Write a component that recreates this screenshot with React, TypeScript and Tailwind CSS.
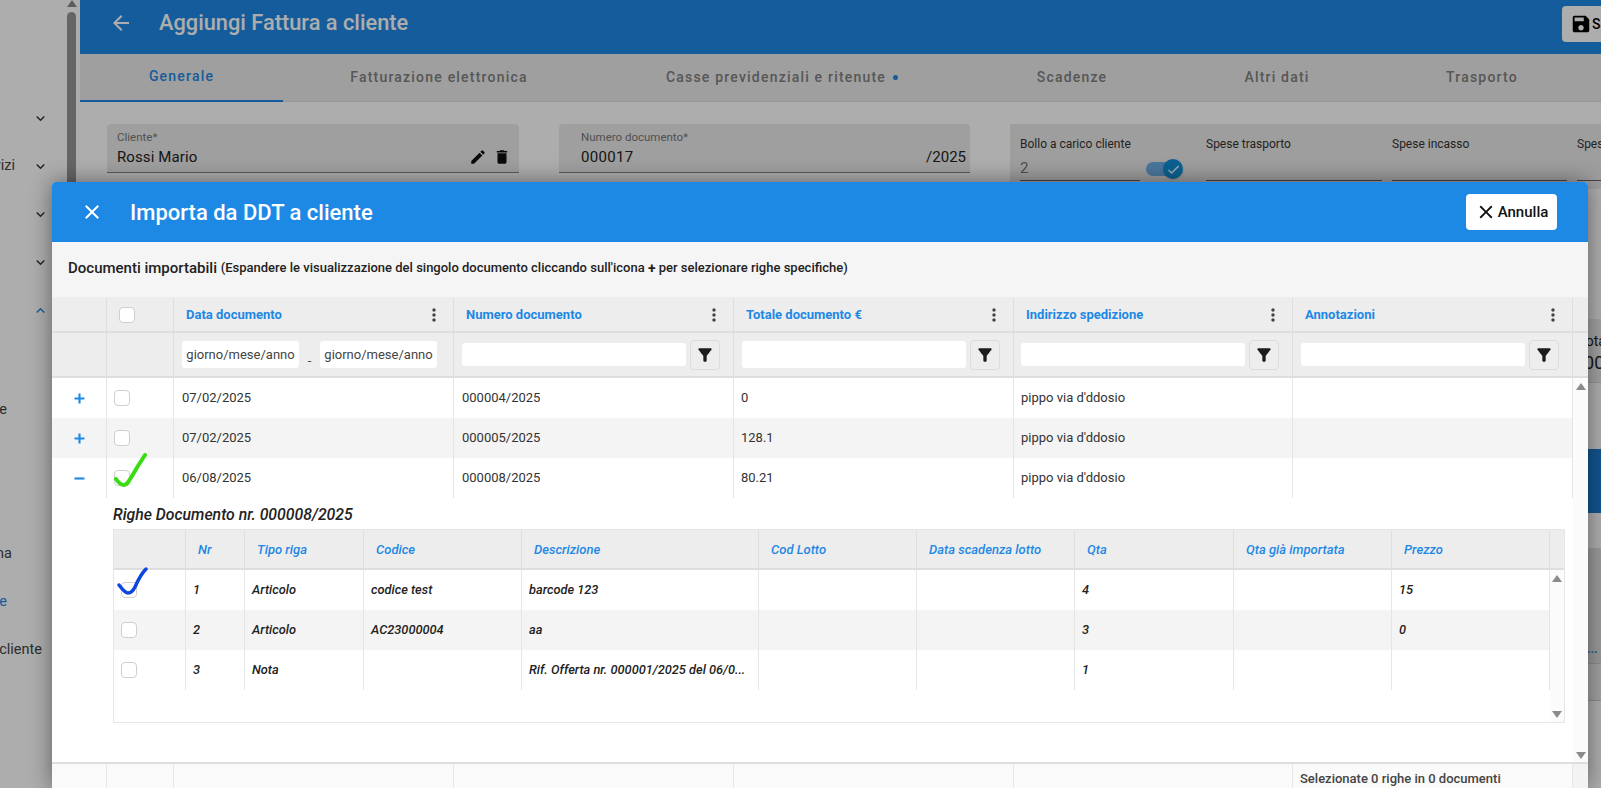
import React from 'react';

// Material icon paths used around the page
const P = {
  back: 'M20 11H7.83l5.59-5.59L12 4l-8 8 8 8 1.41-1.41L7.83 13H20v-2z',
  close: 'M19 6.41 17.59 5 12 10.59 6.41 5 5 6.41 10.59 12 5 17.59 6.41 19 12 13.41 17.59 19 19 17.59 13.41 12z',
  edit: 'M3 17.25V21h3.75L17.81 9.94l-3.75-3.75L3 17.25zM20.71 7.04c.39-.39.39-1.02 0-1.41l-2.34-2.34a.9959.9959 0 0 0-1.41 0l-1.83 1.83 3.75 3.75 1.83-1.83z',
  del: 'M6 19c0 1.1.9 2 2 2h8c1.1 0 2-.9 2-2V7H6v12zM19 4h-3.5l-1-1h-5l-1 1H5v2h14V4z',
  save: 'M17 3H5c-1.11 0-2 .9-2 2v14c0 1.1.89 2 2 2h14c1.1 0 2-.9 2-2V7l-4-4zm-5 16c-1.66 0-3-1.34-3-3s1.34-3 3-3 3 1.34 3 3-1.34 3-3 3zm3-10H5V5h10v4z',
  filter: 'M4.25 5.61C6.27 8.2 10 13 10 13v6c0 .55.45 1 1 1h2c.55 0 1-.45 1-1v-6s3.72-4.8 5.74-7.39c.51-.66.04-1.61-.79-1.61H5.04c-.83 0-1.3.95-.79 1.61z',
  more: 'M12 8c1.1 0 2-.9 2-2s-.9-2-2-2-2 .9-2 2 .9 2 2 2zm0 2c-1.1 0-2 .9-2 2s.9 2 2 2 2-.9 2-2-.9-2-2-2zm0 6c-1.1 0-2 .9-2 2s.9 2 2 2 2-.9 2-2-.9-2-2-2z',
  check: 'M9 16.17 4.83 12l-1.42 1.41L9 19 21 7l-1.41-1.41z',
  down: 'M16.59 8.59 12 13.17 7.41 8.59 6 10l6 6 6-6z',
  up: 'M12 8l-6 6 1.41 1.41L12 10.83l4.59 4.58L18 14z',
  plus: 'M10.5 5h3v5.5H19v3h-5.5V19h-3v-5.5H5v-3h5.5z',
  minus: 'M5 10.5h14v3H5z',
};

const Icon = ({ d, className }: { d: string; className: string }) => (
  <svg viewBox="0 0 24 24" fill="currentColor" className={className}><path d={d} /></svg>
);

const Box = () => <div className="w-4 h-4 rounded-[4px] border border-[#cfcfcf] bg-white" />;

const ArrowUp = () => <div className="w-0 h-0 border-x-[5px] border-x-transparent border-b-[7px] border-b-[#8a8a8a]" />;
const ArrowDown = () => <div className="w-0 h-0 border-x-[5px] border-x-transparent border-t-[7px] border-t-[#8a8a8a]" />;

const sideRows = [
  { label: '', open: false },
  { label: 'Listini servizi', open: false },
  { label: '', open: false },
  { label: '', open: false },
  { label: '', open: true },
];
const sideSub = [
  { label: '', mr: 'mr-[60px]' },
  { label: 'Fattura a cliente', mr: 'mr-[60px]' },
  { label: '', mr: 'mr-[60px]' },
  { label: '', mr: 'mr-[60px]' },
  { label: 'Nota di credito interna', mr: 'mr-[55px]' },
  { label: 'Fattura a cliente', mr: 'mr-[60px]', active: true },
  { label: 'Acquisti da cliente', mr: 'mr-[25px]' },
];

const Sidebar = () => (
  <div className="w-20 shrink-0 flex bg-white">
    <div className="w-[67px] shrink-0 pt-[94px] overflow-hidden text-[14.5px] text-[#444]">
      {sideRows.map((r, i) => (
        <div key={i} className="h-12 flex items-center">
          <div className="w-[15px] shrink-0 flex justify-end whitespace-nowrap">{r.label}</div>
          <Icon d={r.open ? P.up : P.down} className={`w-[17px] h-[17px] ml-[17px] ${r.open ? 'text-[#1e88e5]' : 'text-[#333]'}`} />
        </div>
      ))}
      <div className="mt-[4px]">
        {sideSub.map((r, i) => (
          <div key={i} className={`h-12 flex items-center justify-end whitespace-nowrap ${r.active ? 'text-[#1e88e5]' : ''}`}>
            <span className={r.mr}>{r.label}</span>
          </div>
        ))}
      </div>
    </div>
    <div className="w-[9px] shrink-0 flex flex-col items-center">
      <ArrowUp />
      <div className="w-[9px] mt-[5px] h-[500px] rounded-full bg-[#969696]" />
    </div>
  </div>
);

const tabs = [
  { t: 'Generale', w: 'w-[203px]', on: true },
  { t: 'Fatturazione elettronica', w: 'w-[312px]' },
  { t: 'Casse previdenziali e ritenute', w: 'w-[374px]', dot: true },
  { t: 'Scadenze', w: 'w-[206px]' },
  { t: 'Altri dati', w: 'w-[204px]' },
  { t: 'Trasporto', w: 'w-[206px]' },
];

const Page = () => (
  <div className="flex-1 min-w-0 flex flex-col">
    <div className="h-[54px] shrink-0 pb-[8px] bg-[#1e88e5] flex items-center text-white">
      <Icon d={P.back} className="w-6 h-6 ml-[29px]" />
      <span className="ml-[26px] text-[21.8px] font-medium">Aggiungi Fattura a cliente</span>
      <div className="ml-auto mt-[2px] w-[39px] h-9 rounded-l bg-white text-black flex items-center pl-[8px] text-[14px] font-medium overflow-hidden whitespace-nowrap">
        <Icon d={P.save} className="w-[22px] h-[22px] shrink-0" />
        <span>Salva</span>
      </div>
    </div>
    <div className="h-12 shrink-0 bg-[#ebebeb] border-b border-[#dcdcdc] flex">
      {tabs.map(t => (
        <div key={t.t} className={`${t.w} shrink-0 h-12 pb-[2px] flex items-center justify-center gap-[7px] text-[14px] font-medium tracking-[1.2px] ${t.on ? 'text-[#1e88e5] border-b-2 border-[#1e88e5]' : 'text-[#808080]'}`}>
          {t.t}
          {t.dot && <span className="w-[5px] h-[5px] rounded-full bg-[#1e88e5]" />}
        </div>
      ))}
    </div>
    <div className="pl-[27px] pt-[22px] flex flex-col">
      <div className="flex h-[65px]">
        <div className="w-[412px] h-[49px] rounded-t bg-[#ebebeb] border-b border-[#888] pl-[10px] pt-[6px]">
          <div className="text-[11.5px] leading-[15px] text-[#777]">Cliente*</div>
          <div className="flex items-center pr-2 text-[15px] leading-5 mt-[2px] text-[#222] tracking-[.1px]">
            Rossi Mario
            <Icon d={P.edit} className="w-[18px] h-[18px] ml-auto text-[#111]" />
            <Icon d={P.del} className="w-[18px] h-[18px] ml-[6px] text-[#111]" />
          </div>
        </div>
        <div className="w-[411px] h-[49px] ml-10 rounded-t bg-[#ebebeb] border-b border-[#888] pl-[22px] pt-[6px]">
          <div className="text-[11.5px] leading-[15px] text-[#777]">Numero documento*</div>
          <div className="flex items-center pr-1 text-[15px] leading-5 mt-[2px] text-[#222] tracking-[.3px]">
            000017
            <span className="ml-auto tracking-normal">/2025</span>
          </div>
        </div>
        <div className="ml-10 flex-1 min-w-0 h-[65px] bg-[#e9e9e9] pl-[10px] pt-[12px] flex text-[12px] text-[#333] overflow-hidden">
          <div className="w-[120px] shrink-0 h-[45px] border-b border-[#666]">
            <div className="leading-[16px] whitespace-nowrap">Bollo a carico cliente</div>
            <div className="text-[15px] mt-[6px] leading-5 text-[#777]">2</div>
          </div>
          <div className="w-[38px] shrink-0 ml-[4px] relative">
            <div className="absolute left-[2px] top-[26px] w-[28px] h-[14px] rounded-full bg-[#6eafe6]" />
            <div className="absolute left-[19px] top-[23px] w-5 h-5 rounded-full bg-[#1090d8] shadow flex items-center justify-center text-white">
              <Icon d={P.check} className="w-[15px] h-[15px]" />
            </div>
          </div>
          <div className="w-[176px] shrink-0 ml-[24px] h-[45px] border-b border-[#666] leading-[16px]">Spese trasporto</div>
          <div className="w-[175px] shrink-0 ml-[10px] h-[45px] border-b border-[#666] leading-[16px]">Spese incasso</div>
          <div className="w-[100px] shrink-0 ml-[10px] h-[45px] border-b border-[#666] leading-[16px]">Spese bancarie</div>
        </div>
      </div>
      <div className="ml-[1393px] w-[200px] h-16 mt-[130px] bg-[#ececec] border-b border-[#dcdcdc] pl-[78px] text-[14px] text-[#222] whitespace-nowrap pt-3">
        <div className="leading-5">Totale</div>
        <div className="leading-5 text-[18px] mt-[2px] -ml-[4px]">1000</div>
      </div>
      <div className="ml-[1393px] w-[200px] h-16 mt-[66px] bg-[#1a7dd2]" />
      <div className="ml-[1393px] w-[200px] h-[116px] mt-[35px] bg-[#e2e2e2] border-b border-[#cfcfcf] pt-[95px] pl-[87px] text-[#1e88e5] font-bold text-[12px] leading-none">...</div>
      <div className="ml-[1393px] w-[200px] h-[37px] bg-[#ececec] border-b border-[#cfcfcf]" />
    </div>
  </div>
);

const Cols = ['w-[55px]', 'w-[67px]', 'w-[280px]', 'w-[280px]', 'w-[280px]', 'w-[279px]', 'w-[280px]'];
const headers = ['Data documento', 'Numero documento', 'Totale documento €', 'Indirizzo spedizione', 'Annotazioni'];

const docs = [
  { s: '+', d: '07/02/2025', n: '000004/2025', t: '0' },
  { s: '+', d: '07/02/2025', n: '000005/2025', t: '128.1' },
  { s: '-', d: '06/08/2025', n: '000008/2025', t: '80.21' },
];

const FilterCell = ({ col, pl, tall }: { col: string; pl: string; tall?: boolean }) => (
  <div className={`${col} shrink-0 h-full border-r border-[#dedede] ${pl} flex items-center`}>
    <div className={`w-[224px] ${tall ? 'h-[27px]' : 'h-[23px]'} rounded-[3px] bg-white`} />
    <div className="ml-[4px] w-[30px] h-[30px] rounded-[4px] border border-[#dcdcdc] flex items-center justify-center text-[#1c1c1c]">
      <Icon d={P.filter} className="w-5 h-5" />
    </div>
  </div>
);

const DateInput = () => (
  <div className="w-[117px] h-[27px] rounded-[3px] bg-white flex items-center justify-center text-[13px] text-[#444]">giorno/mese/anno</div>
);

const innerCols = ['w-[72px]', 'w-[59px]', 'w-[119px]', 'w-[158px]', 'w-[237px]', 'w-[158px]', 'w-[158px]', 'w-[159px]', 'w-[158px]', 'w-[158px]'];
const innerHead = ['', 'Nr', 'Tipo riga', 'Codice', 'Descrizione', 'Cod Lotto', 'Data scadenza lotto', 'Qta', 'Qta già importata', 'Prezzo'];
const innerRows = [
  ['', '1', 'Articolo', 'codice test', 'barcode 123', '', '', '4', '', '15'],
  ['', '2', 'Articolo', 'AC23000004', 'aa', '', '', '3', '', '0'],
  ['', '3', 'Nota', '', 'Rif. Offerta nr. 000001/2025 del 06/0...', '', '', '1', '', ''],
];

const InnerTable = () => (
  <div className="w-[1452px] h-[194px] border border-[#e6e6e6] italic flex flex-col">
    <div className="h-[40px] shrink-0 pt-[1px] bg-[#ededed] border-b-2 border-[#dedede] flex">
      {innerHead.map((h, i) => (
        <div key={i} className={`${innerCols[i]} shrink-0 border-r border-[#dedede] pl-3 flex items-center text-[13px] font-medium text-[#1e88e5] whitespace-nowrap`}>{h}</div>
      ))}
      <div className="flex-1" />
    </div>
    <div className="flex flex-1 min-h-0">
      <div className="w-[1436px] shrink-0">
        {innerRows.map((r, ri) => (
          <div key={ri} className={`h-10 flex ${ri === 1 ? 'bg-[#f4f4f4]' : ''}`}>
            {r.map((c, i) => (
              <div key={i} className={`${innerCols[i]} shrink-0 border-r border-[#e6e6e6] pl-[7px] flex items-center text-[12.8px] font-medium text-[#222] whitespace-nowrap relative`}>
                {i === 0 ? <Box /> : c}
                {i === 0 && ri === 0 && (
                  <svg viewBox="0 0 40 40" className="absolute left-[1px] top-[-4px] w-10 h-10" fill="none" stroke="#0b46e0" strokeWidth="3.5" strokeLinecap="round" strokeLinejoin="round">
                    <path d="M4 19C7 23 10 27 13 27C16 27 18 25 20 21C23 14 27 7 31 3" />
                  </svg>
                )}
              </div>
            ))}
          </div>
        ))}
      </div>
      <div className="flex-1 bg-[#fbfbfb] flex flex-col items-center justify-between pt-[5px] pb-[4px]">
        <ArrowUp />
        <ArrowDown />
      </div>
    </div>
  </div>
);

const Dialog = () => (
  <div className="absolute left-[52px] top-[182px] w-[1536px] h-[606px] bg-white rounded-t overflow-hidden shadow-[0_0_22px_rgba(0,0,0,0.45)] flex flex-col">
    <div className="h-[60px] shrink-0 bg-[#1e88e5] flex items-center text-white">
      <Icon d={P.close} className="w-6 h-6 ml-[28px]" />
      <span className="ml-[26px] text-[22px] font-medium">Importa da DDT a cliente</span>
      <div className="ml-auto mr-[31px] w-[91px] h-9 rounded bg-white text-[#111] flex items-center justify-center gap-[1px] text-[15px] font-medium">
        <Icon d={P.close} className="w-[22px] h-[22px]" />
        Annulla
      </div>
    </div>
    <div className="h-[55px] shrink-0 pb-[3px] bg-[#f5f5f5] pl-4 flex items-center text-[#222] font-medium text-[13px] whitespace-pre">
      <span className="text-[15px]">Documenti importabili </span>
      (Espandere le visualizzazione del singolo documento cliccando sull'icona <b className="font-bold text-[14px]">+</b> per selezionare righe specifiche)
    </div>

    <div className="h-[36px] shrink-0 pt-[1px] bg-[#ededed] border-b-2 border-[#dedede] flex">
      <div className={`${Cols[0]} shrink-0 border-r border-[#dedede]`} />
      <div className={`${Cols[1]} shrink-0 border-r border-[#dedede] pl-[12px] flex items-center`}><Box /></div>
      {headers.map((h, i) => (
        <div key={h} className={`${Cols[i + 2]} shrink-0 border-r border-[#dedede] pl-[12px] pr-[9px] flex items-center justify-between text-[13px] font-bold text-[#1e88e5]`}>
          {h}
          <Icon d={P.more} className="w-5 h-5 text-[#444]" />
        </div>
      ))}
    </div>
    <div className="h-[45px] shrink-0 bg-[#ededed] border-b-2 border-[#dedede] flex">
      <div className={`${Cols[0]} shrink-0 border-r border-[#dedede]`} />
      <div className={`${Cols[1]} shrink-0 border-r border-[#dedede]`} />
      <div className="w-[280px] shrink-0 border-r border-[#dedede] pl-[8px] flex items-center">
        <DateInput />
        <span className="w-[21px] text-center text-[13px] text-[#444] mt-3">-</span>
        <DateInput />
      </div>
      <FilterCell col={Cols[3]} pl="pl-[8px]" />
      <FilterCell col={Cols[4]} pl="pl-[8px]" tall />
      <FilterCell col={Cols[5]} pl="pl-[7px]" />
      <FilterCell col={Cols[6]} pl="pl-[8px]" />
    </div>

    <div className="h-[384px] shrink-0 flex">
      <div className="w-[1521px] shrink-0">
        {docs.map((r, ri) => (
          <div key={r.n} className={`h-10 flex text-[13px] text-[#333] ${ri === 1 ? 'bg-[#f4f4f4]' : ''}`}>
            <div className={`${Cols[0]} shrink-0 border-r border-[#e6e6e6] flex items-center justify-center text-[#1e88e5]`}>
              <Icon d={r.s === '+' ? P.plus : P.minus} className="w-[17px] h-[17px]" />
            </div>
            <div className={`${Cols[1]} shrink-0 border-r border-[#e6e6e6] pl-[7px] flex items-center relative`}>
              <Box />
              {ri === 2 && (
                <svg viewBox="0 0 40 40" className="absolute left-[7px] top-[-6px] w-10 h-10" fill="none" stroke="#3bdc12" strokeWidth="4" strokeLinecap="round" strokeLinejoin="round">
                  <path d="M2 27C4 30 7 33 10 33C13 33 15 29 18 24C22 17 27 9 31 3" />
                </svg>
              )}
            </div>
            <div className={`${Cols[2]} shrink-0 border-r border-[#e6e6e6] pl-[8px] flex items-center`}>{r.d}</div>
            <div className={`${Cols[3]} shrink-0 border-r border-[#e6e6e6] pl-[8px] flex items-center`}>{r.n}</div>
            <div className={`${Cols[4]} shrink-0 border-r border-[#e6e6e6] pl-[7px] flex items-center`}>{r.t}</div>
            <div className={`${Cols[5]} shrink-0 border-r border-[#e6e6e6] pl-[7px] flex items-center`}>pippo via d'ddosio</div>
            <div className={`${Cols[6]} shrink-0 border-r border-[#e6e6e6]`} />
          </div>
        ))}
        <div className="pl-[61px]">
          <div className="h-[31px] pt-[2px] flex items-center italic font-medium text-[15.8px] leading-none text-[#222]">Righe Documento nr. 000008/2025</div>
          <InnerTable />
        </div>
      </div>
      <div className="flex-1 bg-[#fbfbfb] flex flex-col items-center justify-between pt-[5px] pb-[3px]">
        <ArrowUp />
        <ArrowDown />
      </div>
    </div>

    <div className="flex-1 bg-[#fafafa] border-t-2 border-[#dedede] flex">
      <div className={`${Cols[0]} shrink-0 border-r border-[#e6e6e6]`} />
      <div className={`${Cols[1]} shrink-0 border-r border-[#e6e6e6]`} />
      <div className={`${Cols[2]} shrink-0 border-r border-[#e6e6e6]`} />
      <div className={`${Cols[3]} shrink-0 border-r border-[#e6e6e6]`} />
      <div className={`${Cols[4]} shrink-0 border-r border-[#e6e6e6]`} />
      <div className={`${Cols[5]} shrink-0 border-r border-[#e6e6e6]`} />
      <div className={`${Cols[6]} shrink-0 border-r border-[#e6e6e6] pl-[7px] pt-[5px] text-[13px] font-medium text-[#444] whitespace-nowrap`}>Selezionate 0 righe in 0 documenti</div>
      <div className="flex-1 bg-[#f3f3f3]" />
    </div>
  </div>
);

export default function App() {
  return (
    <div className="relative w-[1601px] h-[788px] overflow-hidden bg-white flex font-[family-name:Roboto,sans-serif]">
      <Sidebar />
      <Page />
      <div className="absolute inset-0 bg-black/[0.32]" />
      <Dialog />
    </div>
  );
}
